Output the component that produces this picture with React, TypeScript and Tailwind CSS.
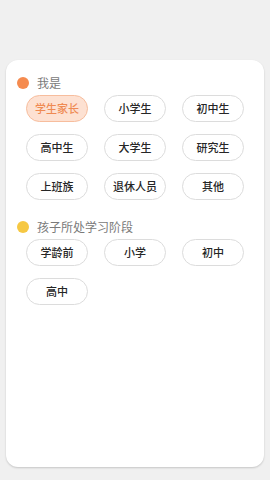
import React from "react";

const font = { fontFamily: '"Noto Sans CJK SC", "Noto Sans", sans-serif' };

function Chip({ label, active }: { label: string; active?: boolean }) {
  return (
    <div
      className={
        "h-[27px] w-[62px] rounded-full border flex items-center justify-center text-[11px] font-medium leading-none " +
        (active
          ? "bg-[#fde1d2] border-[#f7bd9d] text-[#ef8a52]"
          : "bg-white border-[#dcdcdc] text-[#262626]")
      }
    >
      {label}
    </div>
  );
}

function Section({ color, title, items, activeIndex }: { color: string; title: string; items: string[]; activeIndex?: number }) {
  return (
    <div className="flex flex-col">
      <div className="flex items-center h-[16px] pl-[11px]">
        <span className={"w-[12px] h-[12px] rounded-full " + color} />
        <span className="ml-[8px] text-[12px] leading-none text-[#7a7a7a]">{title}</span>
      </div>
      <div className="mt-[4px] pl-[20px] grid grid-cols-[62px_62px_62px] gap-x-[16px] gap-y-[12px]">
        {items.map((it, i) => (
          <Chip key={it} label={it} active={i === activeIndex} />
        ))}
      </div>
    </div>
  );
}

export default function App() {
  return (
    <div className="w-[270px] h-[480px] bg-[#f0f0f0] pt-[60px] px-[6px]" style={font}>
      <div className="h-[407px] bg-white rounded-[12px] shadow-[0_1px_2px_rgba(0,0,0,0.18)] pt-[15px] flex flex-col gap-[19px]">
        <Section
          color="bg-[#f58b4f]"
          title="我是"
          items={["学生家长", "小学生", "初中生", "高中生", "大学生", "研究生", "上班族", "退休人员", "其他"]}
          activeIndex={0}
        />
        <Section
          color="bg-[#f6c843]"
          title="孩子所处学习阶段"
          items={["学龄前", "小学", "初中", "高中"]}
        />
      </div>
    </div>
  );
}
